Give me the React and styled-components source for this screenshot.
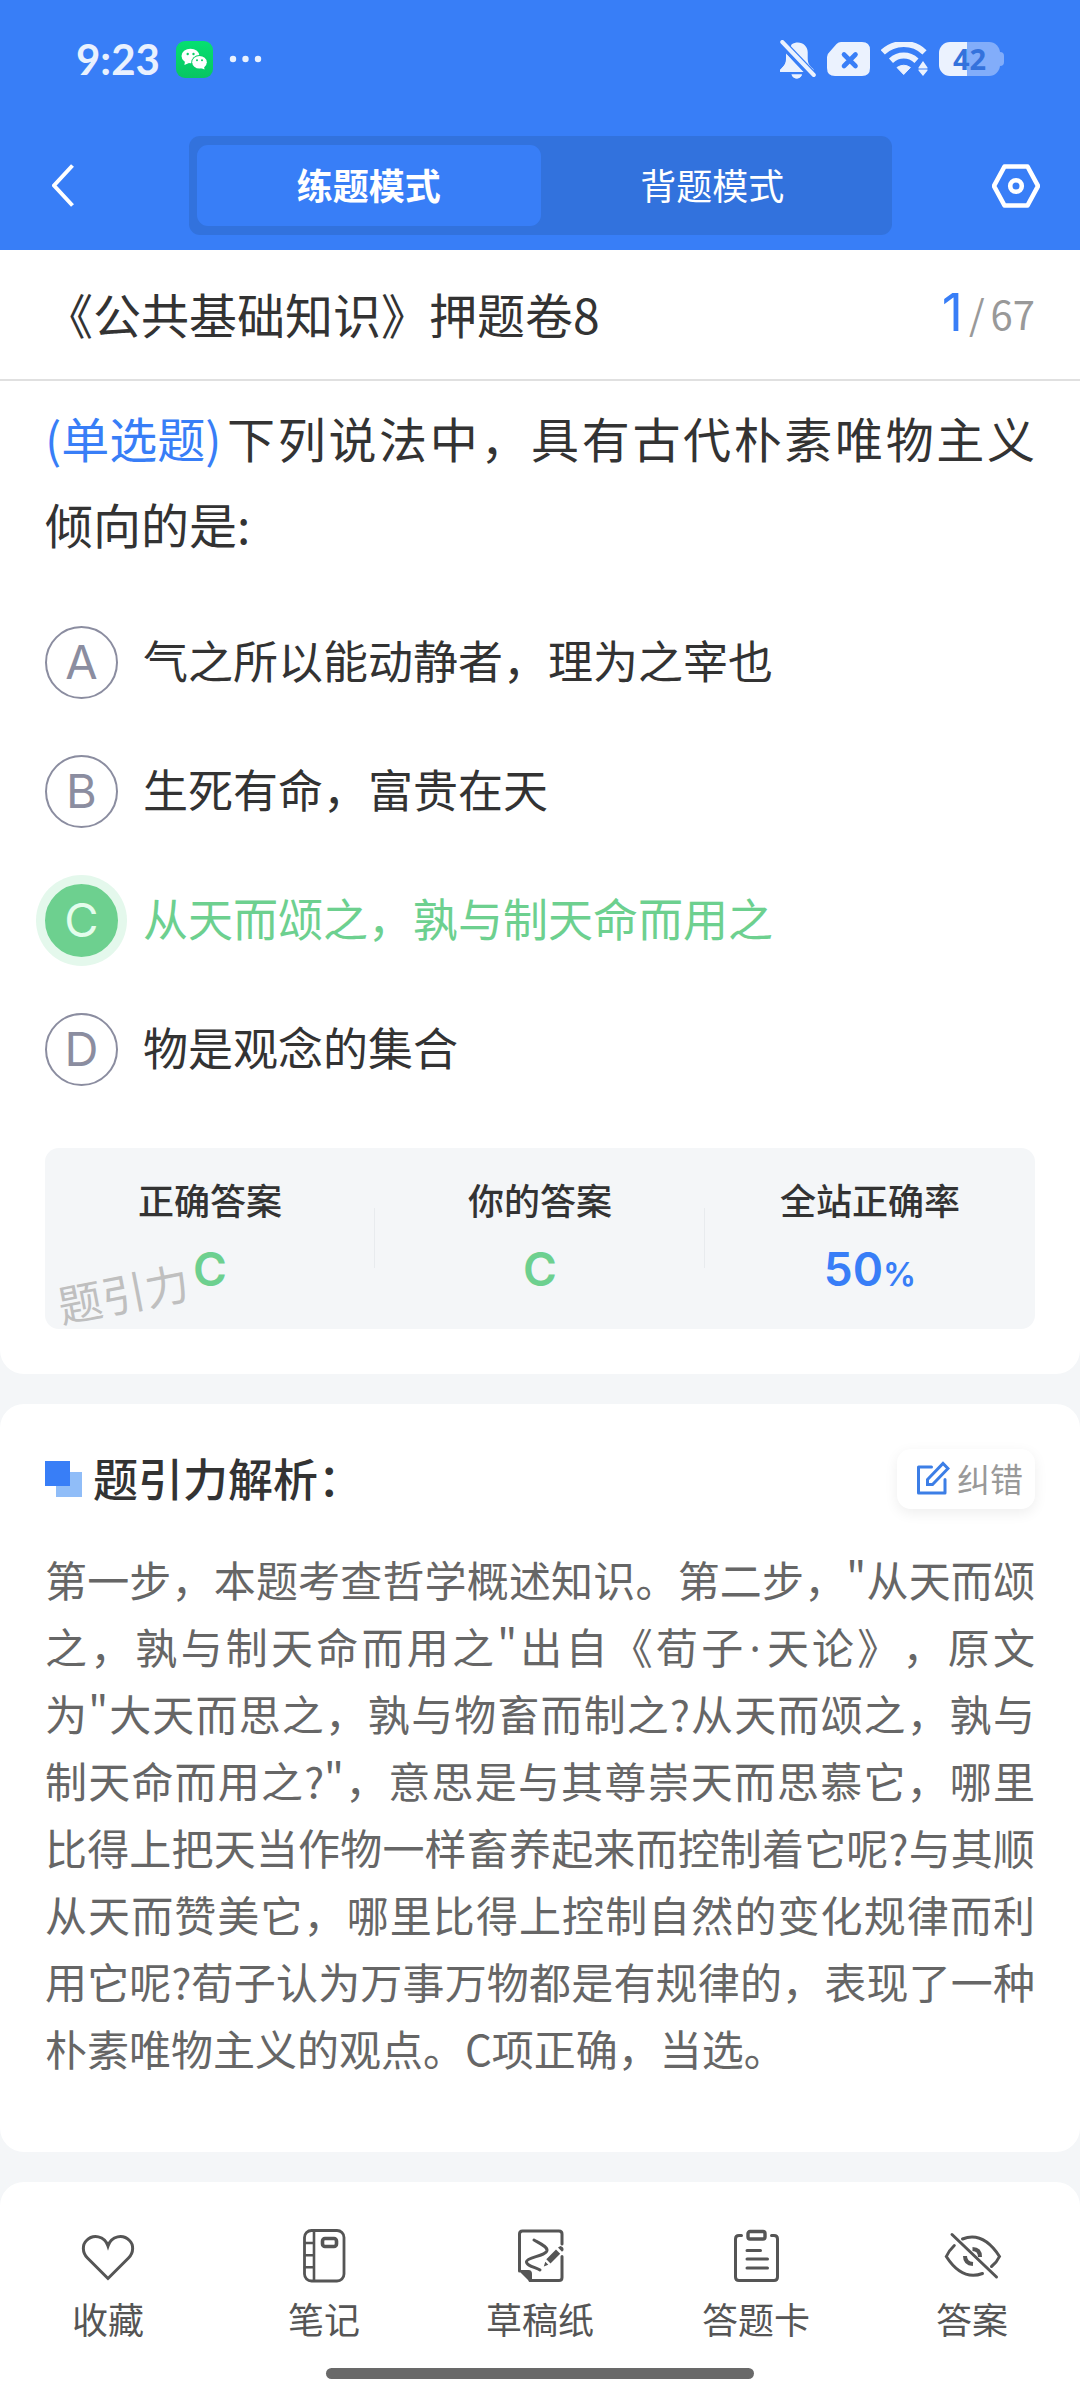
import React, { useState } from 'react';
import styled, { createGlobalStyle } from 'styled-components';

const GlobalStyle = createGlobalStyle`
  * {
    box-sizing: border-box;
  }
  body {
    margin: 0;
    background: #f4f6f8;
    color: #333;
    font-family: 'Noto Sans CJK SC', sans-serif;
    text-spacing-trim: space-all;
  }
  button {
    margin: 0;
    padding: 0;
    border: 0;
    background: none;
    color: inherit;
    font: inherit;
    cursor: pointer;
  }
  svg {
    display: block;
  }
`
const Page = styled.div`
  display: flex;
  flex-direction: column;
  gap: 30px;
  min-height: 100vh;
`
const Header = styled.header`
  background: #387ef7;
  color: #fff;
`
const StatusBar = styled.div`
  display: flex;
  align-items: center;
  justify-content: space-between;
  height: 118px;
  padding: 0 76px;
`
const StatusGroup = styled.div`
  display: flex;
  align-items: center;
  gap: ${props => props.$gap};
`
const Clock = styled.span`
  color: #e9f1fe;
  font-family: Lato, sans-serif;
  font-size: 42px;
  font-weight: 700;
  line-height: 48px;
`
const Battery = styled.div`
  display: flex;
  align-items: center;
`
const BatteryBody = styled.div`
  width: 61px;
  height: 34px;
  border-radius: 11px;
  background: linear-gradient(90deg, #ebf2fe 28px, #82adfa 28px);
  color: #3472dc;
  font-family: 'Noto Sans', sans-serif;
  font-size: 29px;
  font-weight: 700;
  line-height: 34px;
  text-align: center;
`
const BatteryTip = styled.div`
  width: 4px;
  height: 14px;
  border-radius: 0 5px 5px 0;
  background: #82adfa;
`
const NavBar = styled.nav`
  display: grid;
  grid-template-columns: 137px 1fr 148px;
  align-items: center;
  padding: 18px 40px 15px 52px;
`
const NavButton = styled.button`
  justify-self: ${props => props.$side};
`
const Tabs = styled.div`
  display: grid;
  grid-template-columns: 1fr 1fr;
  height: 99px;
  padding: 9px 8px;
  border-radius: 11px;
  background: #3272dd;
`
const Tab = styled.button`
  padding-bottom: 4px !important;
  border-radius: 11px;
  background: ${props => (props.$active ? '#387ef7' : 'transparent')} !important;
  color: #fff;
  font-size: 36px !important;
  font-weight: ${props => (props.$active ? 700 : 400)} !important;
`
const QuestionCard = styled.section`
  margin-top: -30px;
  border-radius: 0 0 24px 24px;
  background: #fff;
`
const TitleBar = styled.div`
  display: flex;
  align-items: center;
  justify-content: space-between;
  height: 131px;
  padding: 0 45px 4px;
  border-bottom: 2px solid #e0e0e0;
`
const Title = styled.h1`
  margin: 0;
  font-size: 48px;
  font-weight: 400;
  line-height: 60px;
`
const Counter = styled.div`
  display: flex;
  align-items: center;
  color: #999;
  font-size: 40px;
  line-height: 60px;
`
const Current = styled.span`
  margin-right: 6px;
  color: #387ef7;
  font-family: Inter, sans-serif;
  font-size: 52px;
`
const Slash = styled.span`
  margin-right: 6px;
`
const QuestionBody = styled.div`
  padding: 13px 45px 45px;
`
const Question = styled.p`
  margin: 0 0 60px;
  font-size: 48px;
  line-height: 86px;
  text-align: justify;
`
const Kind = styled.span`
  display: inline-block;
  margin-right: 3px;
  color: #387ef7;
`
const Options = styled.div`
  display: flex;
  flex-direction: column;
  gap: 56px;
  margin-bottom: 62px;
`
const Option = styled.label`
  display: flex;
  align-items: center;
  color: ${props => (props.$picked ? '#6dd08f' : '#333')};
  font-size: 45px;
  cursor: pointer;
`
const OptionText = styled.span`
  padding-bottom: 6px;
  line-height: 60px;
`
const Radio = styled.input`
  width: 0;
  height: 0;
  margin: 0;
  appearance: none;
`
const Letter = styled.span`
  width: 73px;
  height: 73px;
  margin-right: 25px;
  border: 2px solid ${props => (props.$picked ? '#6dd08f' : '#8b8da0')};
  border-radius: 50%;
  background: ${props => (props.$picked ? '#6dd08f' : 'transparent')};
  box-shadow: ${props => (props.$picked ? '0 0 0 9px #e4f8ec' : 'none')};
  color: ${props => (props.$picked ? '#e4fdec' : '#8b8da0')};
  font-family: Inter, sans-serif;
  font-size: 47px;
  line-height: 68px;
  text-align: center;
`
const Stats = styled.dl`
  position: relative;
  display: grid;
  grid-template-columns: repeat(3, 1fr);
  margin: 0;
  padding: 29px 0 30px;
  border-radius: 14px;
  background: #f4f6f8;
`
const Stat = styled.div`
  text-align: center;
  background: linear-gradient(#e8ebee, #e8ebee) no-repeat right 31px / ${props => (props.$last ? '0 0' : '1px 60px')};
`
const StatLabel = styled.dt`
  font-size: 36px;
  font-weight: 500;
  line-height: 44px;
`
const StatValue = styled.dd`
  display: flex;
  align-items: baseline;
  justify-content: center;
  height: 60px;
  margin: 18px 0 0;
  color: ${props => props.$color};
  font-family: Inter, sans-serif;
  font-size: 46px;
  font-weight: 600;
  line-height: 60px;
`
const Unit = styled.span`
  font-size: 33px;
`
const Watermark = styled.span`
  position: absolute;
  left: 12px;
  bottom: 7px;
  color: #bfbfbf;
  font-size: 44px;
  line-height: 60px;
  transform: rotate(-11deg);
`
const AnalysisCard = styled.section`
  padding: 45px 45px 71px;
  border-radius: 24px;
  background: #fff;
`
const AnalysisHead = styled.div`
  display: flex;
  align-items: center;
  gap: 11px;
  height: 60px;
  margin-bottom: 36px;
`
const Heading = styled.h2`
  flex: 1;
  margin: 0;
  padding-bottom: 3px;
  font-size: 45px;
  font-weight: 500;
  line-height: 60px;
`
const ReportButton = styled.button`
  display: flex;
  align-items: center;
  gap: 7px;
  height: 60px;
  padding: 0 12px 3px 19px !important;
  border-radius: 14px;
  background: #fff !important;
  box-shadow: 0 4px 14px rgba(0, 0, 0, 0.07);
  color: #999 !important;
  font-size: 33px !important;
`
const Explanation = styled.p`
  margin: 0;
  color: #666;
  font-size: 42px;
  line-height: 67px;
  text-align: justify;
`
const MiddleDot = styled.span`
  margin: 0 3px;
  font-family: 'Noto Sans', sans-serif;
  line-height: 1;
`
const BottomBar = styled.footer`
  flex: 1;
  padding: 46px 0 21px;
  border-radius: 24px 24px 0 0;
  background: #fff;
`
const Actions = styled.div`
  display: grid;
  grid-template-columns: repeat(5, 1fr);
  margin-bottom: 28px;
`
const Action = styled.button`
  display: flex;
  flex-direction: column;
  align-items: center;
  gap: 12px;
  color: #555 !important;
  font-size: 36px !important;
  line-height: 44px !important;
`
const HomeBar = styled.div`
  width: 428px;
  height: 11px;
  margin: 0 auto;
  border-radius: 6px;
  background: #696969;
`

const WeChatIcon = () => (
  <svg width="37" height="37" viewBox="0 0 37 37">
    <defs>
      <linearGradient id="wx" x1="0" y1="0" x2="0" y2="1">
        <stop offset="0" stopColor="#05e070" />
        <stop offset="1" stopColor="#08c562" />
      </linearGradient>
    </defs>
    <rect width="37" height="37" rx="9" fill="url(#wx)" />
    <path d="M9 20l-.6 4 4.600-2z" fill="#fff" />
    <ellipse cx="14.500" cy="15" rx="9" ry="7.300" fill="#fff" />
    <ellipse cx="23.500" cy="21.300" rx="8.200" ry="7.200" fill="#07cf67" />
    <ellipse cx="23.500" cy="21.300" rx="7.300" ry="6.300" fill="#fff" />
    <path d="M25 27l3.500 1.600-.5-3.600z" fill="#fff" />
    <g fill="#07cf67">
      <circle cx="11.700" cy="13" r="1.200" />
      <circle cx="17.500" cy="13" r="1.200" />
      <circle cx="21" cy="19.300" r="1" />
      <circle cx="26" cy="19.300" r="1" />
    </g>
  </svg>
)

const DotsIcon = () => (
  <svg width="33" height="8" viewBox="0 0 33 8" fill="#e9f1fe">
    <circle cx="4" cy="4" r="3.200" />
    <circle cx="16.500" cy="4" r="3.200" />
    <circle cx="29" cy="4" r="3.200" />
  </svg>
)

const MutedIcon = () => (
  <svg width="36" height="39" viewBox="0 0 36 39" fill="#ebf2fe">
    <path d="M11.500 4.500C19 -.5 27.700 4.500 27.700 12v6c0 6 2 7.500 5.500 11q2 3-1.500 3H1.500C-1 32-.2 30 1 29c4-4 5.500-6 5.500-12z" />
    <path d="M11.500 34.500h10.500c-2 5.300-8.500 5.300-10.500 0z" />
    <path d="M3 -2L36 32.500V36L24 34 0 7z" fill="#387ef7" />
    <path d="M2.300 2l31.500 33" stroke="#ebf2fe" strokeWidth="4" strokeLinecap="round" />
    <path d="M6 13.500L23.500 32H1.500C-1 32-.2 30 1 29c4-4 5-6 5-11z" />
    <path d="M11.500 34.500h10.500c-2 5.300-8.500 5.300-10.500 0z" />
  </svg>
)

const NoSimIcon = () => (
  <svg width="43" height="34" viewBox="0 0 43 34">
    <path d="M14 0h21q8 0 8 8v18q0 8-8 8H8q-8 0-8-8V15q0-3 2.500-5L9.500 2Q11.500 0 14 0z" fill="#ebf2fe" />
    <path d="M17 12.500l11.500 11.500M28.500 12.500L17 24" stroke="#387ef7" strokeWidth="4.600" strokeLinecap="round" />
  </svg>
)

const WifiIcon = () => (
  <svg width="47" height="34" viewBox="0 0 47 34" fill="none" stroke="#ebf2fe">
    <path d="M1.800 10.300C13.500-.8 32-.8 43.500 10.300" strokeWidth="6" />
    <path d="M10 18.700c7.500-6.800 18-6.800 25.500 0" strokeWidth="6" />
    <path d="M22.700 32.500l-6.700-7q6.700-4.500 13.400 0z" fill="#ebf2fe" strokeWidth="1" strokeLinejoin="round" />
    <path d="M42 19l4.500 6.500v1h-9v-1zM42 34l4.500-5.500v-1h-9v1z" fill="#ebf2fe" stroke="none" />
  </svg>
)

const BackIcon = () => (
  <svg width="24" height="44" viewBox="0 0 24 44" fill="none" stroke="#fff" strokeWidth="4">
    <path d="M20.500 1.500L2 21.500l18.500 20" />
  </svg>
)

const SettingsIcon = () => (
  <svg width="48" height="44" viewBox="0 0 48 44" fill="none" stroke="#fff" strokeWidth="4.600" strokeLinejoin="round">
    <path d="M12.500 2.500h23L46 22 35.500 41.500h-23L2 22z" />
    <circle cx="24" cy="22" r="5.800" />
  </svg>
)

const SquaresIcon = () => (
  <svg width="37" height="36" viewBox="0 0 37 36">
    <path d="M11 11h26v25H11z" fill="#90bdf8" />
    <path d="M0 0h25v25H0z" fill="#387ef7" />
  </svg>
)

const EditIcon = () => (
  <svg width="34" height="34" viewBox="0 0 34 34" fill="none" stroke="#3c7ee6" strokeWidth="3">
    <path d="M15.500 6H2.500v26H29V18.500" strokeLinejoin="round" strokeLinecap="round" />
    <path d="M11.500 23.500v-5L27 2.500 32 7.500 16.500 23.500z" />
  </svg>
)

const ActionIcon = ({ children }) => (
  <svg width="56" height="56" viewBox="0 0 56 56" fill="none" stroke="#555" strokeWidth="3" strokeLinecap="round" overflow="visible">
    {children}
  </svg>
)

const actions = [
  {
    label: '收藏',
    icon: (
      <path d="M28 50.500L7.500 30C2 24.500 2.300 16.500 6.500 12.500 13 6 24.500 7.500 28 18 31.500 7.500 43 6 49.500 12.500 53.700 16.500 54 24.500 48.500 30z" />
    ),
  },
  {
    label: '笔记',
    icon: (
      <>
        <rect x="8.500" y="2.500" width="39.500" height="50.500" rx="7" strokeWidth="2.800" />
        <path d="M18 3v49M9 15h9M9 27.300h9M9 39.300h9" strokeWidth="2.600" />
        <rect x="26.500" y="10.500" width="14" height="8" rx="2.500" strokeWidth="3.600" />
      </>
    ),
  },
  {
    label: '草稿纸',
    icon: (
      <>
        <path d="M7.500 43V6q0-3 3-3h36.500q3 0 3 3v10M50 28.500v21q0 3-3 3H18" strokeWidth="3" />
        <path d="M6 42h10.500q3.500 0 3.500 4v8h-2z" fill="#555" stroke="none" />
        <path d="M22 12c8 4.500 13.500 7 13 10.500-1 5.500-20 6.500-20.500 11-.500 4.500 10 6 13.500 8.500" />
        <path d="M44 21.500l4.200 4.200-9.700 9.800-4.200-4.200zM33.300 33.800l3 3-4.500 1.700zM46 19.500l2.500-1.500q3.500 1 3 4.200l-1.500 1.500z" fill="#555" stroke="none" />
      </>
    ),
  },
  {
    label: '答题卡',
    icon: (
      <>
        <path d="M13.500 7.500h-2.500q-3.500 0-3.500 3.500v38q0 3.500 3.500 3.500h35q3.500 0 3.500-3.500V11q0-3.500-3.500-3.500h-2.500" />
        <rect x="20" y="3.500" width="17" height="7.500" rx="2" strokeWidth="3.400" />
        <path d="M19 22.500h13.500M19 31h20.500M19 40h20.500" />
      </>
    ),
  },
  {
    label: '答案',
    icon: (
      <>
        <path d="M8 6.500L52.500 49" />
        <path d="M10.300 17.500Q5 22.500 2.300 28.500 18 53 38.500 45.500M18.500 11Q39 3 55.500 28.500 53 34 47.500 38.500" />
        <path d="M28.500 21q7.500 0 7.500 8M21 28q0 7.500 8 8" strokeWidth="4" strokeLinecap="butt" />
      </>
    ),
  },
]

const options = [
  { key: 'A', text: '气之所以能动静者，理为之宰也' },
  { key: 'B', text: '生死有命，富贵在天' },
  { key: 'C', text: '从天而颂之，孰与制天命而用之' },
  { key: 'D', text: '物是观念的集合' },
]

function App() {
  const [mode, setMode] = useState('practice');
  const [answer, setAnswer] = useState('C');

  return (
    <Page lang="zh-CN">
      <GlobalStyle />
      <Header>
        <StatusBar>
          <StatusGroup $gap="16px">
            <Clock>9:23</Clock>
            <WeChatIcon />
            <DotsIcon />
          </StatusGroup>
          <StatusGroup $gap="11px">
            <MutedIcon />
            <NoSimIcon />
            <WifiIcon />
            <Battery>
              <BatteryBody>42</BatteryBody>
              <BatteryTip />
            </Battery>
          </StatusGroup>
        </StatusBar>
        <NavBar>
          <NavButton $side="start" aria-label="返回"><BackIcon /></NavButton>
          <Tabs>
            <Tab $active={mode === 'practice'} onClick={() => setMode('practice')}>练题模式</Tab>
            <Tab $active={mode === 'recite'} onClick={() => setMode('recite')}>背题模式</Tab>
          </Tabs>
          <NavButton $side="end" aria-label="设置"><SettingsIcon /></NavButton>
        </NavBar>
      </Header>

      <QuestionCard>
        <TitleBar>
          <Title>《公共基础知识》押题卷8</Title>
          <Counter><Current>1</Current><Slash>/</Slash>67</Counter>
        </TitleBar>
        <QuestionBody>
          <Question>
            <Kind>(单选题)</Kind>下列说法中，具有古代朴素唯物主义倾向的是:
          </Question>
          <Options>
            {options.map(({ key, text }) => (
              <Option key={key} $picked={answer === key}>
                <Radio type="radio" name="answer" checked={answer === key} onChange={() => setAnswer(key)} />
                <Letter $picked={answer === key}>{key}</Letter>
                <OptionText>{text}</OptionText>
              </Option>
            ))}
          </Options>
          <Stats>
            <Stat>
              <StatLabel>正确答案</StatLabel>
              <StatValue $color="#6dd08f">C</StatValue>
            </Stat>
            <Stat>
              <StatLabel>你的答案</StatLabel>
              <StatValue $color="#6dd08f">{answer}</StatValue>
            </Stat>
            <Stat $last>
              <StatLabel>全站正确率</StatLabel>
              <StatValue $color="#387ef7">50<Unit>%</Unit></StatValue>
            </Stat>
            <Watermark>题引力</Watermark>
          </Stats>
        </QuestionBody>
      </QuestionCard>

      <AnalysisCard>
        <AnalysisHead>
          <SquaresIcon />
          <Heading>题引力解析：</Heading>
          <ReportButton><EditIcon />纠错</ReportButton>
        </AnalysisHead>
        <Explanation>
          第一步，本题考查哲学概述知识。第二步，"从天而颂之，孰与制天命而用之"出自《荀子<MiddleDot>·</MiddleDot>天论》，原文为"大天而思之，孰与物畜而制之?从天而颂之，孰与制天命而用之?"，意思是与其尊崇天而思慕它，哪里比得上把天当作物一样畜养起来而控制着它呢?与其顺从天而赞美它，哪里比得上控制自然的变化规律而利用它呢?荀子认为万事万物都是有规律的，表现了一种朴素唯物主义的观点。C项正确，当选。
        </Explanation>
      </AnalysisCard>

      <BottomBar>
        <Actions>
          {actions.map(({ label, icon }) => (
            <Action key={label}>
              <ActionIcon>{icon}</ActionIcon>
              {label}
            </Action>
          ))}
        </Actions>
        <HomeBar />
      </BottomBar>
    </Page>
  );
}

export default App;
